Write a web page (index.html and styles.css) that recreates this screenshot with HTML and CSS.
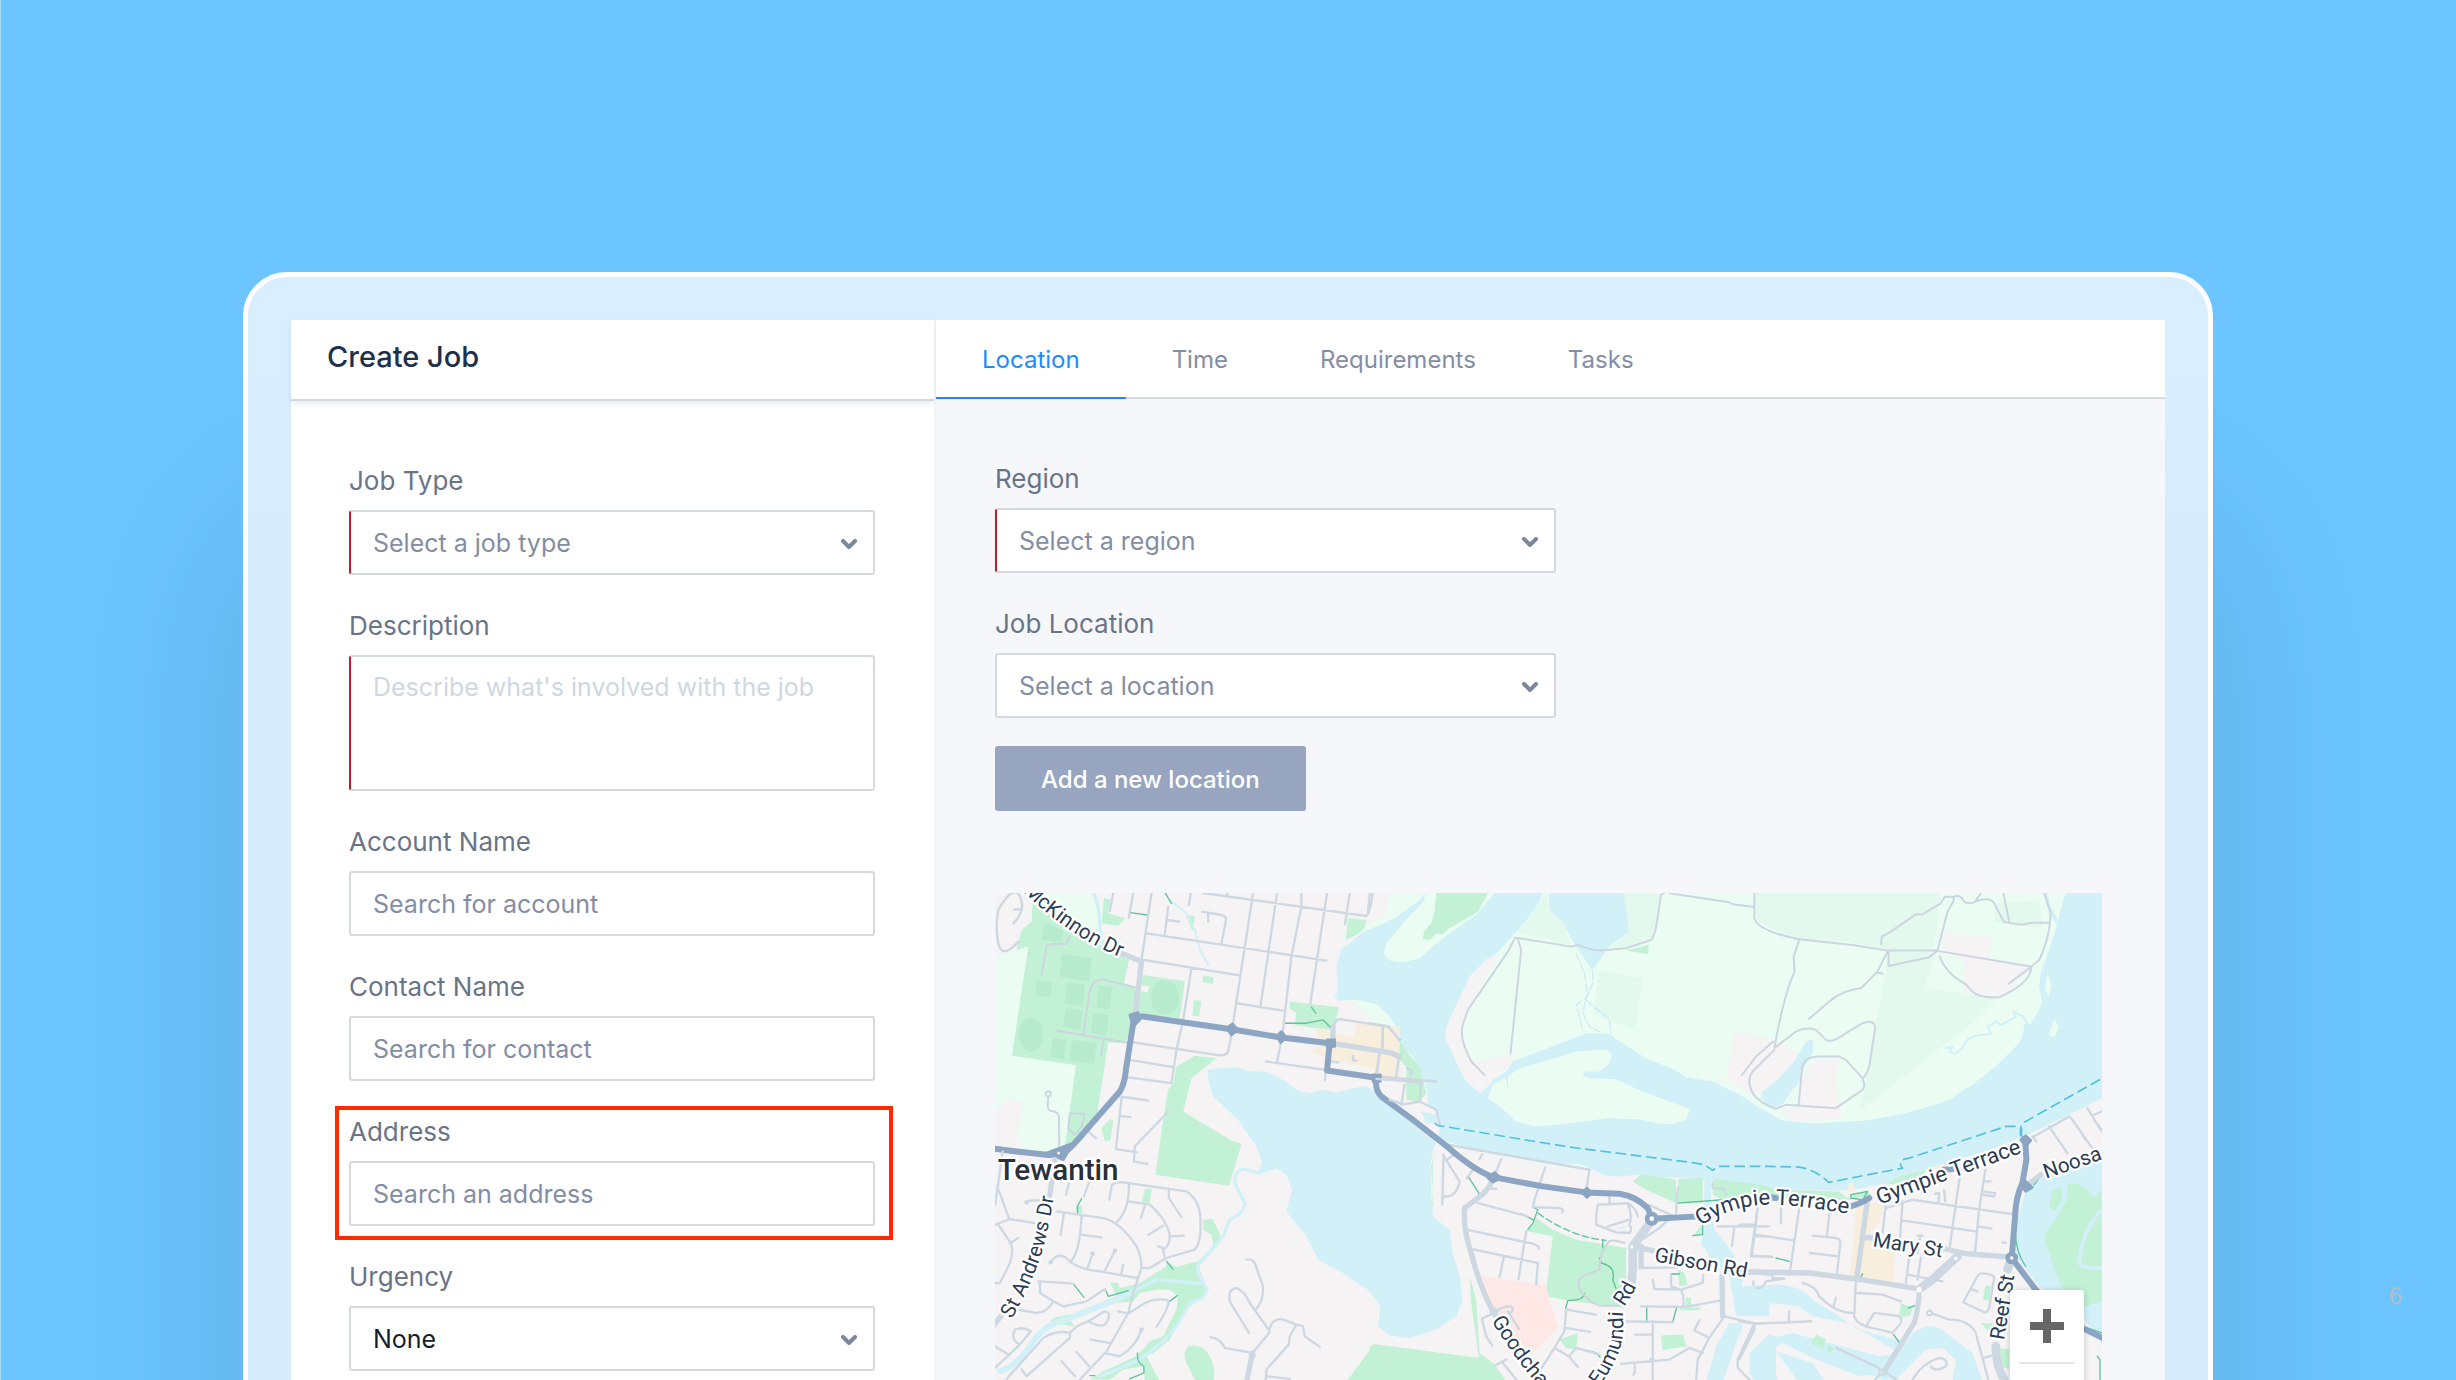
FILE: index.html
```html
<!DOCTYPE html>
<html lang="en">
<head>
<meta charset="utf-8">
<title>Create Job</title>
<link rel="stylesheet" href="styles.css">
</head>
<body>
<main class="slide">
  <div class="tablet">
    <div class="screen">
      <section class="job">
        <header class="job-header"><h1>Create Job</h1></header>
        <form class="fields">
          <div class="field">
            <label for="job-type">Job Type</label>
            <div class="select required">
              <select id="job-type" class="empty"><option>Select a job type</option></select>
              <svg class="chevron" viewBox="0 0 16 10"><path d="M2 2l6 6 6-6"/></svg>
            </div>
          </div>
          <div class="field">
            <label for="description">Description</label>
            <textarea id="description" class="required" placeholder="Describe what's involved with the job"></textarea>
          </div>
          <div class="field">
            <label for="account">Account Name</label>
            <input id="account" type="text" placeholder="Search for account">
          </div>
          <div class="field">
            <label for="contact">Contact Name</label>
            <input id="contact" type="text" placeholder="Search for contact">
          </div>
          <div class="field highlighted">
            <label for="address">Address</label>
            <input id="address" type="text" placeholder="Search an address">
          </div>
          <div class="field">
            <label for="urgency">Urgency</label>
            <div class="select">
              <select id="urgency"><option>None</option></select>
              <svg class="chevron" viewBox="0 0 16 10"><path d="M2 2l6 6 6-6"/></svg>
            </div>
          </div>
        </form>
      </section>
      <section class="details">
        <nav class="tabs">
          <a class="tab active" href="#location">Location</a>
          <a class="tab" href="#time">Time</a>
          <a class="tab" href="#requirements">Requirements</a>
          <a class="tab" href="#tasks">Tasks</a>
        </nav>
        <div class="location">
          <form class="fields">
            <div class="field">
              <label for="region">Region</label>
              <div class="select required">
                <select id="region" class="empty"><option>Select a region</option></select>
                <svg class="chevron" viewBox="0 0 16 10"><path d="M2 2l6 6 6-6"/></svg>
              </div>
            </div>
            <div class="field">
              <label for="job-location">Job Location</label>
              <div class="select">
                <select id="job-location" class="empty"><option>Select a location</option></select>
                <svg class="chevron" viewBox="0 0 16 10"><path d="M2 2l6 6 6-6"/></svg>
              </div>
            </div>
          </form>
          <button class="add" type="button">Add a new location</button>
          <div class="map">
            <svg class="map-canvas" viewBox="0 0 3324 1560" preserveAspectRatio="xMinYMin slice" role="img" aria-label="Map of Tewantin">
              <!-- river, north shore and lake -->
              <g transform="translate(1125 -39)">
                <path class="meadow" d="M225 39H2200V735H225z"/>
                <path class="meadow" d="M-60 39H180V110L60 140 0 155-60 150zM-60 355L15 362 45 392 75 420 110 500 150 560 175 630 180 670 140 600 60 480z"/>
                <path class="land" d="M0 39H65L45 105 10 125-60 160V39z"/>
                <path class="wood" d="M1155 39H1715L1695 210H1550L1440 185 1290 178 1170 130 1155 90zM1555 215H1700L1667 322 1780 340 1885 355 1810 430 1475 690 1510 480 1550 280zM1880 70L2010 60 2020 145 1875 125zM530 39L540 95 580 125 605 195 435 155 490 100zM760 39H875L850 175 770 205H720L778 155zM690 272L820 295 798 455 672 400z"/>
                <path class="park" d="M770 212L837 195V223z"/>
                <path class="water" d="M520 39L505 75 470 120 440 155 390 212 300 290 240 420 227 455 230 480 285 600 335 640 370 600 410 575 430 545 540 503 620 472 650 460 700 460 720 463 760 490 830 535 920 572 950 592 1030 605 1110 645 1180 690 1240 722 1340 731 1490 722 1610 700 1720 668 1750 655 1775 635 1810 615 1880 560 1950 490 1963 460 1965 430 1985 432 2010 390 2020 365 2010 320 2015 280 2040 210 2060 150 2080 70 2090 39H2210V650L2070 720 1980 762 1850 815 1760 840 1650 875 1560 910 1440 932 1260 932 1200 925 1100 908 1000 900 920 895 800 885 740 891 700 885 655 862 600 855 540 857 440 832 330 815 240 790 205 780 210 740 205 700 175 670 172 630 155 580 130 530 105 510 85 450 60 410 20 372-40 360-95 362-105 350-95 330-100 260-85 205-60 190-20 155 45 130 80 110 150 60 165 39z"/>
                <path class="meadow" d="M165 39V60L100 130 50 190 42 220 60 242 100 248 150 235 190 200 240 160 320 105 375 39z"/>
                <path class="park" d="M200 39H355L325 95 240 145 218 163 200 162 180 180 160 178 163 155 185 130 195 95z"/>
                <path class="water" d="M537 39H760L770 80 778 155 720 200 680 255 668 272 655 250 620 200 605 175 580 125 540 90z"/>
                <path class="meadow" d="M415 590L450 565 540 540 620 515 710 510 727 525 718 555 690 575 645 575 640 588 660 595 740 598 820 635 963 688 950 720 910 733 870 732 810 718 715 715 600 730 500 740 440 725 400 688 355 655 370 615zM2035 278L2048 320 2038 350 2028 330zM2055 418L2070 440 2055 472 2038 465z"/>
                <path class="land" d="M390 220L350 238 300 290 240 420 227 455 230 480 285 600 335 640 370 600 430 545 430 522 340 540 305 535 278 460 295 390zM1095 456L1210 475 1290 525 1250 570 1180 640 1140 640 1070 598zM1330 540L1410 535 1400 640 1415 685 1415 718 1265 725 1230 690 1290 680 1295 600zM1728 155L1867 170 1862 235 1990 260 1910 345 1780 340 1787 255 1765 230 1720 210z"/>
                <path class="water" d="M1310 485L1325 478 1332 490 1330 520 1300 570 1290 610 1270 630 1235 680 1200 680 1175 655 1180 635 1220 605 1270 550z"/>
                <path class="creek narrow" d="M1728 505L1750 500 1742 515 1755 523 1780 505 1795 478 1830 465 1865 463 1855 440 1880 425 1895 435 1940 412 1932 395 1960 408 1975 430"/>
                <path class="creek" d="M2030 39L2040 80 2065 128"/>
              </g>
              <!-- lake -->
              <g transform="translate(-15 -39)">
                <path class="water" d="M655 570L690 565 740 562 780 575 830 575 880 600 920 630 960 640 1000 630 1040 638 1090 625 1130 618 1160 640 1230 700 1340 790 1330 810 1322 860 1325 940 1330 1010 1380 1050 1390 1120 1410 1190 1418 1260 1400 1310 1340 1350 1260 1376 1200 1368 1165 1340 1172 1280 1140 1235 1050 1175 985 1140 950 1070 890 995 907 930 890 885 860 867 815 880 800 885 817 850 800 800 745 720 670 650 655 600z"/>
                <path class="water" d="M1295 695L1340 705 1345 730 1310 730z"/>
              </g>

              <!-- north-west -->
              <g transform="translate(-15 -39)">
                <path class="meadow" d="M15 230L115 200 260 550 235 780 200 820 100 820 80 780 100 665 45 660 15 750zM125 39H315L335 90 345 190 300 180 230 130 130 60z"/>
                <path class="land" d="M45 660L100 670 80 760 15 750V700z"/>
                <path class="park" d="M128 60L200 115 300 180 418 238 402 310 440 320 432 405 408 490 355 488 322 700 280 780 225 800 258 556 66 527 115 200 80 210 95 150 125 125zM342 55L362 60 355 100 405 115 385 138 335 130zM458 285L585 303 570 415 440 400zM588 105L615 108 608 155zM640 287L672 292 670 312 638 306zM612 360L634 363 628 410 608 407zM1075 115L1130 120 1125 145 1100 165 1068 180zM900 365L1047 382 1035 440 1020 450 915 435 920 400 900 385zM615 528L680 535 605 595 580 695 725 782 755 793 718 918 497 885 520 720 535 630 550 610 560 560zM335 745L360 718 370 722 362 780 345 785zM1190 450L1230 480 1255 520 1290 560 1310 640 1290 665 1250 660 1250 560 1185 500z"/>
                <path class="pitch" d="M215 220L305 235 297 305 210 290zM140 300L187 306 180 353 135 346zM232 307L285 313 280 380 225 370zM325 315L368 322 358 388 320 382zM165 130L220 150 215 188 155 180zM230 385L278 392 272 450 218 442zM310 400L357 406 350 468 303 460zM190 475L230 480 222 538 182 530zM245 480L320 490 312 552 238 542z"/>
                <ellipse class="pitch" cx="123" cy="465" rx="36" ry="52"/><ellipse class="pitch" cx="525" cy="352" rx="42" ry="52"/>
                <path class="land" d="M455 316L478 320 474 338 452 334z"/>
                <path class="shops" d="M1100 430L1200 440 1230 440V595L1160 600 1165 570 1050 545 965 518 995 490 975 445 1025 455 1090 475zM1165 520L1225 530 1215 600 1160 595z"/>
                <path class="creek" d="M312 39Q330 90 330 130T340 190"/>
                <path class="creek narrow" d="M540 60L590 100 615 150 630 210 655 255"/>
                <path class="trail" d="M527 40L545 70M422 98L472 105M885 430L950 430 1000 420 1022 442M965 382L978 400M690 527L712 522"/>
                <path class="road minor" d="M70 130Q110 90 90 50T25 90Q15 140 25 190T85 185M72 88H95M370 39L360 92M430 39L417 113M485 39L455 240M535 80L525 162M533 120L568 125M603 39L597 75M470 160L1010 242M640 39L1130 108Q1145 90 1148 39M790 39L730 430M862 39L812 380M935 80L905 230 880 450 862 548M1012 39L962 370M1080 39L1066 133M712 39V48M638 95L695 105Q712 108 708 125L695 190M655 98V125M460 240L747 286M605 265L580 420 560 510 545 610 410 592M740 370L880 392M425 487L680 525Q715 530 716 510L726 460M420 540L550 562M828 545L1008 570 1006 600M1025 480Q1028 420 1050 418L1180 438 1178 510M1200 440L1178 436M1170 515L1160 580M388 650L475 662M395 655L378 808 440 817M388 708L422 712M535 695L435 800 432 845 473 853M295 755L318 775M1340 605L1160 590M1045 548L1025 545M1090 528V542H1100M935 39V80"/>
                <path class="road minor pale" d="M155 285L170 200Q175 190 230 192L240 170M435 322L335 298Q310 300 300 330L280 465M200 452L410 488M340 485L333 528M175 652Q170 690 180 692 205 695 207 710L208 810M240 700L285 702 275 740 255 765 235 745z"/>
                <circle class="ring" cx="175" cy="642" r="8"/>
                <path class="road mid" d="M385 215L455 245 435 410M1025 490L1200 518 1230 530M1030 480V440"/>
                <path class="highway" d="M0 805L80 815 170 825Q220 830 250 795L390 635Q405 610 408 570L430 430Q432 408 460 410L725 448 870 472 1020 490 1012 572 1160 594Q1155 630 1175 650L1270 720"/>
                <path class="hub" d="M420 405L445 398 450 420 430 440zM710 445L728 432 745 450 725 465zM860 470L875 455 890 473 873 488zM1150 585H1172V605H1150zM1012 480H1035V500H1012zM170 820L250 790 220 840z"/>
                <circle class="dot" cx="206" cy="820" r="4"/>
              </g>

              <!-- south-west -->
              <g transform="translate(-15 681)">
                <path class="park" d="M640 300L668 297 692 345 690 370 650 415 625 440 650 500 645 530 600 560 570 600 540 660 490 700 470 710 510 785H465L460 740 400 750 360 780H300L340 755 440 710 480 665 520 650 560 570 565 530 540 510 500 510 450 520 430 545 370 550 240 600 255 622 220 615 178 610 190 595 240 585 380 530 360 488 385 490 390 505 450 490 530 440 530 425 560 442 625 425 672 380 665 345 640 330zM465 208L486 206 480 248 455 248zM257 258H277V280H260zM1153 674L1240 685 1450 715 1540 800H1060zM597 680Q640 670 660 710T670 790H620L590 730Q575 695 597 680z"/>
                <path class="creek wide" d="M30 755Q80 740 120 680T200 610L380 540 430 515"/>
                <path class="creek" d="M440 510L500 480 560 485 640 492M810 160L760 148Q735 150 735 190L765 250Q765 280 720 300L700 350 625 435 625 460 652 510 640 535 600 550 560 620 520 665 450 720 380 750 330 770"/>
                <path class="trail" d="M275 237L263 258V282M530 425L550 450M252 495L282 533M348 513L355 530 415 513M540 545L562 528M443 700Q440 730 462 740V760L420 778M300 768H315"/>
                <path class="road minor" d="M15 255L25 190 38 95M15 315L60 298 135 310M22 200L58 298M25 315L62 370Q72 390 60 430L30 490H15M60 370L85 355M200 275L340 295Q390 305 440 380 455 410 455 445L430 520 415 580 350 695 270 780M222 280L212 345M275 285Q270 400 242 425M272 345L335 353M182 428Q200 400 225 412 260 450 330 455L442 475M308 402L293 445M375 393L345 453M400 435L395 460M358 240L365 200Q370 185 400 188L590 215Q630 240 632 300 635 370 615 390L530 415 480 445H455M417 190Q420 270 380 308M415 245L480 255Q530 300 540 345 540 380 520 390L525 415M465 258L453 295M475 345L520 318M540 350L582 348M505 380L520 385M537 210V235L575 292M240 180L228 225M298 185L282 230M110 248Q120 240 150 242M145 485L250 492M150 490V520L190 545 220 560 290 545 345 508M190 545Q170 580 140 580L80 570M15 680L55 705M15 745L90 675Q60 660 75 630 100 620 122 635L90 675M50 778L160 655Q200 630 240 640V655L110 770 95 750M240 640Q260 615 295 605L345 575Q370 580 345 615 330 625 295 605M385 575L415 582 450 560Q490 530 537 543 535 570 500 622M302 660L358 670M455 630Q440 680 390 710L350 702M260 697L298 740M215 725L255 770M770 420Q795 415 800 445L820 500Q822 545 798 570M778 640L722 550Q710 510 740 505 765 515 780 550L835 628M662 653Q690 655 705 685L788 700 838 640Q840 600 875 598L920 615 900 650 897 675 830 750 828 785M920 615L940 620 945 650 990 682M830 770L900 778"/>
                <circle class="end" cx="182" cy="428" r="7"/><circle class="end" cx="308" cy="402" r="7"/><circle class="end" cx="375" cy="393" r="7"/><circle class="end" cx="110" cy="248" r="7"/><circle class="end" cx="455" cy="630" r="7"/>
                <path class="road mid" d="M195 120L178 235M40 580L10 620M788 700L770 790"/>
                <circle class="end" cx="788" cy="708" r="10"/>
              </g>

              <!-- north shore roads -->
              <g transform="translate(1125 -39)">
                <path class="road minor pale" d="M345 585L305 545Q270 480 278 440L295 390 415 215 437 173 605 200 625 195Q670 215 710 210L770 205 845 180Q855 170 862 130L875 45 885 39M445 178L455 210 423 520M900 40L1080 67 1090 73 1150 80M1155 39V110Q1155 150 1290 178L1450 195 1555 212H1700L1985 260"/>
                <path class="road minor pale" d="M1290 180L1273 230 1276 275Q1245 340 1215 505M1118 585L1160 530 1212 485M1215 505L1280 455Q1310 440 1340 450L1370 480Q1390 490 1430 460L1480 430Q1520 415 1517 450L1500 560Q1490 590 1480 595L1430 540 1410 530H1350Q1300 530 1298 570L1288 675M1480 595Q1490 620 1480 630L1400 685 1250 675 1220 687Q1170 670 1150 640 1130 600 1150 575L1215 510M1555 215L1525 275 1475 325Q1420 330 1380 365L1318 418M1522 278L1540 281M1558 215V258L1680 232 1705 212 1735 95 1752 65 1755 50H1727L1715 70 1660 103H1640L1565 155 1538 170 1536 193M1755 50Q1775 42 1785 65 1800 75 1818 65L1836 39M1818 65Q1870 45 1880 80L1905 125Q1960 140 1985 128H2040M1903 39L1920 125M2025 39L2045 100 2040 150Q2030 200 2010 240L1985 262 1918 312M1987 262Q1985 310 1890 352 1830 355 1810 335L1790 313Q1730 280 1712 230"/>
                <path class="river-line" d="M620 220L645 280 655 350 620 375 640 450M670 275V310L650 355 640 400 660 440 690 455M650 360L720 420 725 460M412 590L415 625"/>
                <path class="road minor" d="M0 39L-5 100M0 430L55 440 90 480M40 440L38 505M0 510L60 520 88 535 78 600M30 515L22 580M20 597L158 608M155 608L150 665 95 675 105 615M112 565L125 570V583M60 660L100 673M150 665L200 690 212 740"/>
                <circle class="end" cx="90" cy="480" r="6"/><circle class="end" cx="155" cy="608" r="6"/>
              </g>

              <!-- south centre -->
              <g transform="translate(1125 681)">
                <path class="meadow" d="M220 62L330 92 440 107 530 133 630 132 655 145 600 148 430 115 230 75z"/>
                <path class="park" d="M200 90L190 130 188 260 192 262 184 140zM790 185L815 165 880 172 920 180V250L830 210zM928 178L1000 175V250H920zM1030 178L1100 185 1200 200V225L1060 240 1030 225zM550 330L620 360 770 385 770 565 600 543 528 530 550 350 475 335 500 295zM300 470L320 540 330 700 375 735 420 800H0V680L15 674 328 715 305 550zM925 450L945 460 955 495 930 500zM950 532L965 535V555L948 560zM930 565L995 563 990 572H935zM875 648L940 645 952 680 880 692zM570 660L625 640 620 690 590 685zM1000 310V345L970 350zM1015 403L1050 415 1040 435z"/>
                <path class="hospital" d="M335 470L528 497 567 625 470 720 435 650 370 575 350 520z"/>
                <path class="water" d="M1005 180H1025V240L1035 330Q1060 360 1090 400L1125 470 1115 500 1200 560V590L1100 590 1080 470 1050 440 995 375 1005 330zM1080 610L1120 612 1060 790H1010L1040 680zM1200 645L1140 700V760L1160 790H1220V650zM735 325L775 318 760 328z"/>
                <path class="trail" d="M295 170L330 223M490 262L505 270 490 310 475 330M455 282L490 300M700 360V385M690 415L695 430Q740 440 730 480L745 520M645 522Q640 545 595 542L588 568M1000 310V345L970 348M925 250L1060 240M905 463H930M832 560V603M922 563L910 608M655 693L680 700 692 712"/>
                <path class="trail dashed" d="M505 280Q600 350 710 362"/>
                <path class="road minor" d="M235 75L660 150Q655 180 650 215M220 105L270 185Q260 235 222 230M252 105L235 118M222 105L218 255M338 103L330 118M395 118L370 180M527 143L495 240 490 262M310 150L292 175M365 207H380M325 250L475 290M490 262L570 265Q585 270 578 278M290 330L490 372Q510 380 508 388M305 388L505 430 500 495M402 415L390 472M470 335L447 478M720 230V250M685 255L775 250Q790 290 780 315 790 330 780 340L740 338 680 315Q680 280 685 255M775 250Q800 265 805 290M715 320L780 300M838 255L910 288 870 325 810 365M925 205L920 280M1045 320H1200M1095 320L1088 380M1165 265L1145 405M1155 350H1200M1145 410H1200M810 445L925 443M905 465V500L935 510Q945 530 942 560M850 480L855 508 935 510 1000 490 1002 465M815 560L950 562 1055 542M750 605L910 608M850 605V780M797 645H850M755 733L900 720 960 685 1000 700M795 735Q800 755 792 765M590 570L680 585M590 570L585 635 555 685 510 755M588 625L662 637M555 685L598 710 625 742M598 710L620 685 690 705M410 720L378 737M385 575L337 597 350 650 368 678M385 570Q430 550 430 570 425 585 415 575L448 628M400 730L440 780M1065 590L1160 612 1200 610M1155 612L1105 720V745L1150 790M1065 590L1020 655 985 720 980 790M1020 655L975 632 990 602M1152 485Q1150 510 1175 510L1200 500M1030 190V205L1065 208 1070 225"/>
                <path class="road minor pale" d="M765 370Q720 355 715 370 690 400 690 450L640 470Q620 485 630 510 670 560 700 558H750"/>
                <path class="road mid" d="M370 175Q360 210 325 235L285 265Q280 330 305 400 330 500 370 575L385 600"/>
                <path class="road mid" d="M815 440V380M1058 470L1060 590M1120 455L1200 460"/>
                <path class="road big" d="M845 305L790 380V440L785 520"/>
                <path class="road mid" d="M790 380L860 395"/>
                <circle class="dot" cx="787" cy="382" r="5"/>
                <circle class="end" cx="372" cy="575" r="12"/><circle class="end" cx="848" cy="722" r="8"/>
                <path class="highway" d="M130 0L230 78Q310 150 370 172L520 200 650 218 750 222Q800 230 835 265L848 297 990 290"/>
                <path class="hub" d="M355 175L375 158 395 175 370 187zM638 218L652 205 668 220 652 233z"/>
                <circle class="roundabout" cx="847" cy="297" r="14"/>
                <path class="ferry" d="M195 10L205 17 600 82 980 130Q1010 135 1030 152L1045 140H1200L1290 142Q1340 150 1378 188L1600 145Q1580 120 1620 115L1910 20H1945L1960 30M1955 50Q1950 10 1970 5L2200 -125"/>
              </g>

              <!-- south-east -->
              <g transform="translate(2235 681)">
                <path class="land" d="M865 60L960 0 1088 -65V140L900 200z"/>
                <path class="park" d="M0 190L90 205 160 212 300 215 325 235 385 212 395 225 330 240 300 250 0 225zM440 195L480 170 560 150 555 165 480 190z"/>
                <path class="shops" d="M350 250L435 250 420 310 385 345 475 350 460 490 330 475 345 340zM330 190H345V215H325zM590 140L645 130 635 180 610 175z"/>
                <path class="water" d="M905 170Q960 130 1100 130V690L1030 590 900 500 830 410 835 300 860 215z"/>
                <path class="park" d="M1088 210L1065 235 1045 210Q1020 185 985 195L985 235 950 300 915 345 920 370 930 400 950 460 985 540 1040 560 1088 545zM940 210L965 205 970 240 945 275 930 260z"/>
                <path class="ring-water" d="M1088 270Q1030 330 1020 430 1040 450 1088 445"/>
                <path class="water" d="M0 500L120 495Q190 500 220 540L300 590 350 625 430 650 500 670 520 640 550 625Q590 610 620 640L700 700 730 785H640L650 720 610 685 560 690 470 780H430Q390 760 360 770L230 720 130 670 100 690 90 730 120 790H45Q30 700 80 660L160 640 270 670 420 710 480 700 330 610 220 590 180 560 100 550 60 590 0 580zM0 615L10 620 0 660zM110 695L220 730 260 790H180z"/>
                <path class="park" d="M230 645L260 660 250 690 215 670zM270 675L285 685 270 705 262 690zM485 550L522 565 510 590 480 592zM738 498L755 500 750 543 732 540zM725 610L765 612 760 650zM780 685L810 690V750L790 740z"/>
                <path class="trail" d="M110 415L150 425M370 462L365 472M463 645L480 668 497 652M507 565L527 558M848 30V50M335 225L385 215 370 240 335 235zM905 170L885 195M828 330Q830 400 860 440M1075 710L1083 720V780M1045 625L1088 640"/>
                <path class="road minor" d="M0 315H48M55 265L38 408 100 412M48 345L162 362M180 265L152 455M125 262V312M272 270L263 348M220 348L290 355Q305 358 303 370L293 465M212 400L298 410M440 265L520 240 640 258 820 283M440 250L430 340M490 245L483 352M488 302L710 335M665 150L632 380M742 130L720 270 708 395M735 185H755M732 215L768 220 765 230 732 225M715 320L757 327M598 250L600 220 588 222M615 212L618 245M800 370L790 368M535 348H550M543 350L535 400M510 410L500 490M545 415L535 480M505 465L610 485M355 520L430 525 485 545M350 480L345 590Q350 610 380 620L460 640 485 610Q490 590 470 588L405 580 380 620M98 465L100 475 135 477M190 490Q230 500 240 530 290 580 340 580M290 535L283 560M45 610V630L0 720M0 605L45 612 150 608 215 605M150 575L148 610M290 685L420 745M430 755L400 790M435 755L500 800M520 780Q550 730 600 715 630 720 620 740 590 760 575 740M575 580L630 600Q690 600 710 640L730 715 750 790M735 715L768 705M700 510L715 515M672 548L715 470Q720 458 740 462 765 465 765 475L750 565Q745 580 735 578L672 548M1000 0L1060 85M930 20L985 100M1065 0L1088 30M880 50L892 65M885 50L990 -10Q1000 -5 1040 60M1045 -35L1088 35M1065 -15L1088 -25M50 505Q70 510 80 485L135 477"/>
                <circle class="ring" cx="571" cy="580" r="7"/><circle class="ring" cx="430" cy="757" r="9"/>
                <path class="road mid" d="M20 457L210 460 350 478 540 508M385 240L370 350 352 480M368 352L400 355M605 385L680 402 810 412M540 510Q540 560 525 610L435 755M905 165L860 200"/>
                <path class="road big" d="M545 505L580 480 655 410M770 680Q770 740 800 790M812 430L805 450"/>
                <circle class="dot" cx="540" cy="510" r="8"/><circle class="dot" cx="650" cy="416" r="5"/>
                <path class="highway" d="M85 232L110 235M325 262Q360 255 390 235M615 150L640 148M858 58L862 120 850 190Q830 230 828 290L818 415 890 510 980 600 1100 660"/>
                <path class="hub" d="M845 60L860 48 875 62 860 80zM845 195L860 185 880 203 860 215z"/>
                <circle class="roundabout" cx="818" cy="415" r="12"/>
              </g>

              <!-- labels -->
              <g class="labels">
                <defs>
                  <path id="mckinnon" d="M84 -6Q230 140 400 202"/>
                  <path id="andrews" d="M50 1280Q130 1140 154 1030T186 850"/>
                  <path id="goodcha" d="M1490 1284Q1560 1400 1650 1500"/>
                  <path id="eumundi" d="M1770 1540C1870 1420 1890 1350 1886 1290S1900 1240 1926 1180"/>
                  <path id="gympie" d="M2119 1000Q2220 935 2330 936T2620 976"/>
                </defs>
                <text class="town" x="8" y="861">Tewantin</text>
                <text><textPath href="#mckinnon">McKinnon Dr</textPath></text>
                <text><textPath href="#andrews">St Andrews Dr</textPath></text>
                <text><textPath href="#goodcha">Goodchap St</textPath></text>
                <text text-anchor="end"><textPath href="#eumundi" startOffset="100%">Eumundi Rd</textPath></text>
                <text class="terrace"><textPath href="#gympie">Gympie Terrace</textPath></text>
                <text class="terrace" transform="translate(2655 936) rotate(-20)">Gympie Terrace</text>
                <text transform="translate(1978 1106) rotate(10)">Gibson Rd</text>
                <text transform="translate(2634 1061) rotate(9)">Mary St</text>
                <text transform="translate(3030 1344) rotate(-81)">Reef St</text>
                <text transform="translate(3156 858) rotate(-19)">Noosa</text>
              </g>
            </svg>
            <div class="zoom">
              <button type="button" aria-label="Zoom in"><svg viewBox="0 0 34 34"><path d="M13 0h8v13h13v8H21v13h-8V21H0v-8h13z"/></svg></button>
              <button type="button" aria-label="Zoom out"><svg viewBox="0 0 34 34"><path d="M0 13h34v8H0z"/></svg></button>
            </div>
          </div>
        </div>
      </section>
    </div>
  </div>
  <span class="page-number">6</span>
</main>
</body>
</html>
```
FILE: styles.css
```css
* { box-sizing: border-box; }
body { margin: 0; font-family: Inter, "Liberation Sans", sans-serif; }

.slide {
  position: relative;
  height: 100vh;
  overflow: hidden;
  padding: 272px 243px 0 242px;
  background: #6cc5ff;
  border-left: 1px solid #a3dafd;
}
.tablet {
  border: 5px solid #fff;
  border-radius: 44px 44px 0 0;
  padding: 43px 43px 0;
  background: linear-gradient(#d9eeff, #d6ebfb 400px);
  box-shadow: 0 250px 200px rgba(0, 0, 0, .12);
}
.screen {
  display: grid;
  grid-template-columns: 645px minmax(0, 1fr);
  background: #fff;
}

.job { border-right: 2px solid #f3f4f6; }
.job-header {
  display: flex;
  align-items: center;
  height: 81px;
  padding: 0 36px 5px;
  border-bottom: 2px solid #d3d7de;
  box-shadow: 0 3px 6px rgba(0, 0, 0, .08);
}
h1 { margin: 0; font-size: 29px; font-weight: 500; line-height: 36px; color: #20304a; }

.fields { display: flex; flex-direction: column; gap: 36px; }
.job .fields { padding: 65px 59px 65px 58px; }
.field { position: relative; display: flex; flex-direction: column; gap: 14px; }
.field label { font-size: 26px; line-height: 30px; color: #6a7487; }

input, select, textarea {
  display: block;
  width: 100%;
  height: 65px;
  margin: 0;
  padding: 0 22px;
  border: 2px solid #d5d8df;
  border-radius: 3px;
  background: #fff;
  font: 25px/30px Inter, "Liberation Sans", sans-serif;
  color: #151e2f;
  appearance: none;
  outline: 0;
}
input::placeholder { color: #838da4; opacity: 1; }
textarea { height: 136px; padding: 15px 22px; resize: none; }
textarea::placeholder { color: #cfd7e2; opacity: 1; }
select.empty { color: #838da4; }
.select { position: relative; }
.required select, textarea.required { border-left-color: #c01c2b; }
.chevron {
  position: absolute;
  top: 29px;
  right: 18px;
  width: 16px;
  height: 10px;
  fill: none;
  stroke: #7c869d;
  stroke-width: 4;
  stroke-linecap: round;
  stroke-linejoin: round;
  pointer-events: none;
}
.highlighted::after {
  content: "";
  position: absolute;
  inset: -11px -18px -14px -14px;
  border: 4px solid #ff2a00;
  pointer-events: none;
}

.details { display: flex; flex-direction: column; background: #f5f7fb; }
.tabs { display: flex; height: 79px; background: #fff; border-bottom: 2px solid #d5d9e0; }
.tab {
  display: flex;
  align-items: center;
  height: 79px;
  padding: 3px 46px 0;
  border-bottom: 2px solid transparent;
  font-size: 24px;
  line-height: 28px;
  color: #838da4;
  text-decoration: none;
}
.tab.active { color: #1a8cff; border-color: #1a8cff; }

.location { padding: 65px 63px 0 59px; }
.location .fields { max-width: 561px; }
.add {
  display: block;
  height: 65px;
  margin: 28px 0 82px;
  padding: 2px 46px 0;
  border: 0;
  border-radius: 3px;
  background: #98a5c0;
  color: #fff;
  font: 500 24px/28px Inter, "Liberation Sans", sans-serif;
}

.map { position: relative; }
.map-canvas { display: block; width: 100%; background: #f5f3f4; overflow: hidden; }
.land { fill: #f5f3f4; }
.water { fill: #d2f0f8; }
.meadow { fill: #ebfdf3; }
.wood { fill: #e4f9ee; }
.park { fill: #c2f1d5; }
.pitch { fill: #b8ebcd; }
.shops { fill: #f7eedd; }
.hospital { fill: #fde8e6; }
.creek, .road, .highway, .trail, .ferry, .river-line, .ring-water { fill: none; stroke-linecap: round; stroke-linejoin: round; }
.creek { stroke: #d2f0f8; stroke-width: 10; }
.creek.wide { stroke-width: 18; }
.creek.narrow { stroke-width: 6; }
.river-line { stroke: #cfeaf5; stroke-width: 4; stroke-dasharray: 24 8; }
.ring-water { stroke: #d2f0f8; stroke-width: 12; }
.trail { stroke: #5fc29d; stroke-width: 4; }
.trail.dashed { stroke-dasharray: 20 10; }
.road { stroke: #ced8e2; }
.road.minor { stroke-width: 7; }
.road.pale { stroke: #cdd5e1; stroke-width: 6; }
.road.mid { stroke-width: 16; }
.road.big { stroke-width: 26; }
.highway { stroke: #8ba5c2; stroke-width: 18; }
.hub { fill: #8ba5c2; stroke: #8ba5c2; stroke-width: 8; stroke-linejoin: round; }
.roundabout { fill: #fff; stroke: #8ba5c2; stroke-width: 14; }
.end { fill: #ced8e2; }
.ring { fill: #f5f3f4; stroke: #ced8e2; stroke-width: 6; }
.dot { fill: #fff; }
.ferry { stroke: #52c1df; stroke-width: 5; stroke-dasharray: 32 14; stroke-linecap: butt; }
.labels text {
  font-family: Roboto, "Liberation Sans", sans-serif;
  font-size: 62px;
  fill: #2c3b54;
  stroke: #fff;
  stroke-width: 14;
  stroke-linejoin: round;
  paint-order: stroke;
}
.labels .terrace { font-size: 66px; }
.labels .town { font-size: 89px; font-weight: 500; fill: #2a2f38; }

.zoom {
  position: absolute;
  top: 397px;
  right: 18px;
  width: 74px;
  background: #fff;
  border-radius: 3px;
  box-shadow: 0 1px 6px rgba(0, 0, 0, .2);
}
.zoom button {
  display: flex;
  align-items: center;
  justify-content: center;
  width: 56px;
  height: 72px;
  margin: 0 9px;
  padding: 0;
  border: 0;
  background: none;
}
.zoom button + button { border-top: 2px solid #e6e6e6; }
.zoom svg { width: 34px; height: 34px; fill: #666; }

.page-number {
  position: absolute;
  right: 54px;
  bottom: 70px;
  font: 24px/28px "Liberation Sans", sans-serif;
  color: #b4bbc6;
}
```
